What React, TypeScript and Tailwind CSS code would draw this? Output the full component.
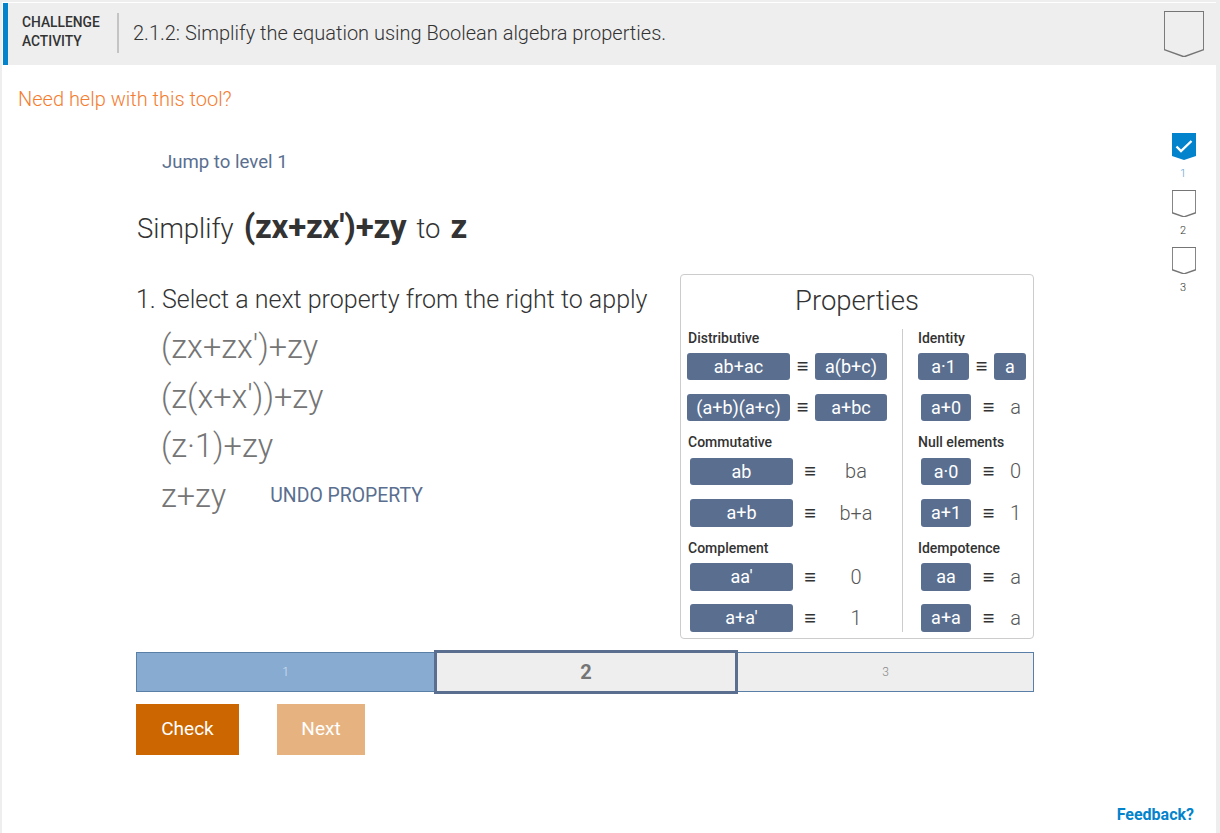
const ribbonPoints = '0.5,0.5 99.5,0.5 99.5,84 50,99.5 0.5,84'

function Ribbon({ className }: { className: string }) {
  return (
    <svg viewBox="0 0 100 100" preserveAspectRatio="none" className={className}>
      <polygon points={ribbonPoints} fill="none" stroke="#757575" strokeWidth="1.5" vectorEffect="non-scaling-stroke" />
    </svg>
  )
}

function Prop({ w, tall, children }: { w: string; tall?: boolean; children: React.ReactNode }) {
  return (
    <div className={`${w} ${tall ? 'h-[28px] leading-[28px]' : 'h-[27px] leading-[27px]'} shrink-0 rounded-[3px] bg-[#5a6f90] text-white text-[18px] text-center`}>
      {children}
    </div>
  )
}

function Equiv({ className }: { className: string }) {
  return <div className={`${className} text-[#333] text-[20px] leading-[27px] text-center shrink-0`}>≡</div>
}

function Result({ w, children }: { w: string; children: React.ReactNode }) {
  return <div className={`${w} text-[#555] font-light text-[20px] leading-[27px] text-center shrink-0`}>{children}</div>
}

function SectionTitle({ children }: { children: React.ReactNode }) {
  return <div className="text-[14px] font-medium leading-[18px] text-[#333]">{children}</div>
}

function WideRow({ left, right, tall }: { left: string; right: string; tall?: boolean }) {
  return (
    <div className="flex items-center ml-[3px]">
      <Prop w="w-[103px]" tall={tall}>{left}</Prop>
      <Equiv className="w-[34px]" />
      <Result w="w-[58px]">{right}</Result>
    </div>
  )
}

function NarrowRow({ left, right, tall }: { left: string; right: string; tall?: boolean }) {
  return (
    <div className="flex items-center ml-[3px]">
      <Prop w="w-[50px]" tall={tall}>{left}</Prop>
      <Equiv className="w-[35px]" />
      <Result w="w-[19px]">{right}</Result>
    </div>
  )
}

const steps = ["(zx+zx')+zy", "(z(x+x'))+zy", '(z·1)+zy']

export default function App() {
  return (
    <div className="h-[833px] w-[1220px] overflow-hidden bg-[#eeeeee] pl-[2px] pr-[4px] pt-[2px] font-['Roboto',sans-serif]">
      <div className="relative h-[831px] bg-white pt-px">
        {/* Header */}
        <div className="ml-px flex h-[62px] items-center border-l-[5px] border-[#0283cc] bg-[#eeeeee] pb-[2px] pl-[14px] pr-[12px]">
          <div className="-mt-[2px] w-[80px] text-[13.8px] font-medium leading-[19px] text-[#333]">
            CHALLENGE
            <br />
            ACTIVITY
          </div>
          <div className="mx-[15px] h-[40px] w-[2px] bg-[#c4c4c4]" />
          <div className="-ml-px flex-1 text-[20px] font-light text-[#333]">
            2.1.2: Simplify the equation using Boolean algebra properties.
          </div>
          <Ribbon className="mt-[2px] h-[46px] w-[40px]" />
        </div>

        <div className="pl-[16px] pt-[22px] text-[20px] font-light leading-[24px] text-[#f47d30]">Need help with this tool?</div>

        {/* Level badges */}
        <div className="absolute right-[20px] top-[131px] flex w-[24px] flex-col items-center text-[11px] font-light text-[#333]">
          <div className="relative h-[27px] w-[24px] bg-[#0283cc] [clip-path:polygon(0_0,100%_0,100%_85%,50%_100%,0_85%)]">
            <svg viewBox="0 0 24 27" className="absolute left-0 top-0 h-[27px] w-[24px]" fill="none" stroke="white" strokeWidth="2.4">
              <path d="M4.5 13.5l4.5 4.5L19.5 8" />
            </svg>
          </div>
          <div className="mt-[7px] h-[23px] -translate-x-px leading-[14px] text-[#5a9fcf]">1</div>
          <Ribbon className="h-[27px] w-[24px]" />
          <div className="mt-[7px] h-[23px] -translate-x-px leading-[14px]">2</div>
          <Ribbon className="h-[27px] w-[24px]" />
          <div className="mt-[7px] -translate-x-px leading-[14px]">3</div>
        </div>

        <div className="ml-[134px] w-[898px]">
          <div className="ml-[26px] mt-[39px] text-[18.6px] leading-[24px] text-[#5a6f90]">Jump to level 1</div>

          <div className="ml-px mt-[33px] flex items-baseline text-[27.5px] font-light leading-[40px] text-[#333]">
            <span>Simplify</span>
            <span className="ml-[10px] text-[33px] font-bold tracking-[-0.2px]">(zx+zx')+zy</span>
            <span className="ml-[10px]">to</span>
            <span className="ml-[10px] text-[33px] font-bold">z</span>
          </div>

          <div className="mt-[25px] flex">
            {/* Left column */}
            <div className="w-[544px]">
              <div className="mt-[10px] text-[25px] font-light leading-[32px] text-[#333]">1. Select a next property from the right to apply</div>
              <div className="ml-[25px] mt-[6px] text-[32.4px] font-light text-[#757575]">
                {steps.map((step) => (
                  <div key={step} className="h-[49.5px] leading-[50px]">
                    {step}
                  </div>
                ))}
                <div className="flex h-[50px] items-center leading-[50px]">
                  <span>z+zy</span>
                  <span className="ml-[44px] text-[19.4px] font-normal text-[#5a6f90]">UNDO PROPERTY</span>
                </div>
              </div>
            </div>

            {/* Properties */}
            <div className="h-[365px] w-[354px] rounded-[4px] border border-[#cccccc] bg-white">
              <div className="h-[54px] pt-[8px] text-center text-[27.5px] font-light leading-[36px] text-[#333]">Properties</div>
              <div className="flex">
                <div className="h-[303px] w-[222px] border-r border-[#cccccc] pl-[6px]">
                  <div className="ml-px"><SectionTitle>Distributive</SectionTitle></div>
                  <div className="mt-[6px] flex items-center">
                    <Prop w="w-[103px]">ab+ac</Prop>
                    <Equiv className="w-[25px]" />
                    <Prop w="w-[72px]">a(b+c)</Prop>
                  </div>
                  <div className="mt-[14px] flex items-center">
                    <Prop w="w-[103px]">(a+b)(a+c)</Prop>
                    <Equiv className="w-[25px]" />
                    <Prop w="w-[72px]">a+bc</Prop>
                  </div>
                  <div className="ml-px mt-[12px]"><SectionTitle>Commutative</SectionTitle></div>
                  <div className="mt-[7px]"><WideRow left="ab" right="ba" /></div>
                  <div className="mt-[14px]"><WideRow left="a+b" right="b+a" tall /></div>
                  <div className="ml-px mt-[12px]"><SectionTitle>Complement</SectionTitle></div>
                  <div className="mt-[6px]"><WideRow left="aa'" right="0" tall /></div>
                  <div className="mt-[13px]"><WideRow left="a+a'" right="1" tall /></div>
                </div>
                <div className="pl-[15px]">
                  <SectionTitle>Identity</SectionTitle>
                  <div className="mt-[6px] flex items-center">
                    <Prop w="w-[51px]">a·1</Prop>
                    <Equiv className="w-[25px]" />
                    <Prop w="w-[32px]">a</Prop>
                  </div>
                  <div className="mt-[14px]"><NarrowRow left="a+0" right="a" /></div>
                  <div className="mt-[12px]"><SectionTitle>Null elements</SectionTitle></div>
                  <div className="mt-[7px]"><NarrowRow left="a·0" right="0" /></div>
                  <div className="mt-[14px]"><NarrowRow left="a+1" right="1" tall /></div>
                  <div className="mt-[12px]"><SectionTitle>Idempotence</SectionTitle></div>
                  <div className="mt-[6px]"><NarrowRow left="aa" right="a" tall /></div>
                  <div className="mt-[13px]"><NarrowRow left="a+a" right="a" tall /></div>
                </div>
              </div>
            </div>
          </div>

          {/* Level progress */}
          <div className="mt-[13px] flex h-[40px] items-center">
            <div className="flex h-[40px] w-[298px] items-center justify-center border border-r-0 border-[#5a7fa6] bg-[#87abd1] text-[12px] font-light text-[#d5e4f2]">1</div>
            <div className="z-10 flex h-[44px] w-[304px] items-center justify-center border-[3px] border-[#5a6f90] bg-[#eeeeee] text-[20px] font-bold text-[#757575]">2</div>
            <div className="flex h-[40px] flex-1 items-center justify-center border border-l-0 border-[#5a7fa6] bg-[#eeeeee] text-[12px] font-light text-[#8a8a8a]">3</div>
          </div>

          <div className="mt-[12px] flex">
            <button className="h-[51px] w-[103px] bg-[#cc6600] pb-[1px] text-[19px] text-white">Check</button>
            <button className="ml-[38px] h-[51px] w-[88px] bg-[#e6b380] pb-[1px] text-[19px] text-white">Next</button>
          </div>
        </div>

        <div className="absolute bottom-[8px] right-[22px] text-[16px] font-bold leading-[20px] text-[#0283cc]">Feedback?</div>
      </div>
    </div>
  )
}
